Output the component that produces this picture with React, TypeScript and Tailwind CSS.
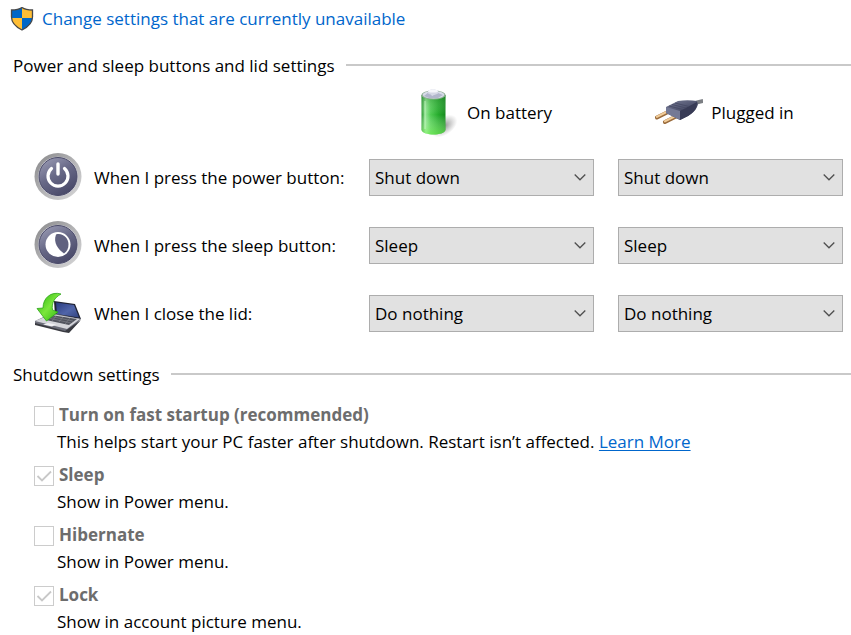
import { useId, useState, type ReactNode } from "react";

function ShieldIcon() {
  return (
    <svg className="h-6 w-6 shrink-0" viewBox="0 0 24 24" aria-hidden="true">
      <defs>
        <clipPath id="shield-clip">
          <path d="M12 .5C9 2.500 5 3 1.500 3V10C1.500 16 6 20 12 23C18 20 22.500 16 22.500 10V3C19 3 15 2.500 12 .5Z" />
        </clipPath>
      </defs>
      <g clipPath="url(#shield-clip)">
        <path fill="#0067c8" d="M0 0H12V11H0ZM12 11H24V24H12Z" />
        <path fill="#ffbe35" d="M12 0H24V11H12ZM0 11H12V24H0Z" />
      </g>
      <path
        d="M12 .5C9 2.500 5 3 1.500 3V10C1.500 16 6 20 12 23C18 20 22.500 16 22.500 10V3C19 3 15 2.500 12 .5Z"
        fill="none"
        stroke="#484848"
        strokeWidth="1.300"
      />
    </svg>
  );
}

function BatteryIcon() {
  return (
    <svg className="h-12 w-12 shrink-0" viewBox="0 0 48 48" aria-hidden="true">
      <defs>
        <linearGradient id="cell" x1="0" x2="1">
          <stop offset="0" stopColor="#2f9a35" />
          <stop offset=".18" stopColor="#8fe590" />
          <stop offset=".38" stopColor="#4fcb52" />
          <stop offset=".7" stopColor="#25ab2c" />
          <stop offset="1" stopColor="#158a1d" />
        </linearGradient>
        <linearGradient id="cell-glow" x1="0" x2="0" y1="0" y2="1">
          <stop offset="0" stopColor="#176f20" stopOpacity=".35" />
          <stop offset=".5" stopColor="#fff" stopOpacity="0" />
          <stop offset="1" stopColor="#83fb5c" stopOpacity=".55" />
        </linearGradient>
        <radialGradient id="cell-shadow">
          <stop offset="0" stopColor="#555" stopOpacity=".65" />
          <stop offset="1" stopColor="#777" stopOpacity="0" />
        </radialGradient>
      </defs>
      <ellipse cx="33" cy="37" rx="15" ry="9" fill="url(#cell-shadow)" transform="rotate(-35 33 37)" />
      <path d="M10.500 6V41C12 47 33 47 34.500 41V6Z" fill="url(#cell)" />
      <path d="M10.500 6V41C12 47 33 47 34.500 41V6Z" fill="url(#cell-glow)" />
      <ellipse cx="22.500" cy="6" rx="12" ry="4.500" fill="#8fae96" />
      <ellipse cx="22.500" cy="5.700" rx="10.800" ry="3.800" fill="#d8dbe8" />
      <path d="M13 7L18 3L21 7L27 4L32 6L27 9H18Z" fill="#b1b6cb" />
      <path d="M17 4V2C17 0 27 0 27 2V4C27 6 17 6 17 4Z" fill="#d4d7e4" />
      <ellipse cx="22" cy="2" rx="5" ry="1.600" fill="#f5f6fb" />
      <path d="M14 12V40" stroke="#d4ffd0" strokeWidth="1.500" opacity=".45" />
    </svg>
  );
}

function PlugIcon() {
  return (
    <svg className="h-12 w-12 shrink-0" viewBox="0 0 48 48" aria-hidden="true">
      <defs>
        <linearGradient id="plug-body" x1="0" x2=".6" y1="0" y2="1">
          <stop offset="0" stopColor="#777b94" />
          <stop offset=".45" stopColor="#565a75" />
          <stop offset="1" stopColor="#303249" />
        </linearGradient>
      </defs>
      <path d="M37 16C40 14 43 12.500 48 12" fill="none" stroke="#7b7e83" strokeWidth="4" />
      <path d="M2 28.500L14 22.500M10 33L22 27" stroke="#9a6b3b" strokeWidth="4" strokeLinecap="round" />
      <path d="M2 27.800L14 21.800M10 32.300L22 26.300" stroke="#f0cb98" strokeWidth="2.200" strokeLinecap="round" />
      <path d="M11 18L23 12C29 11 36 11 42 12L43 15C42 20 38 24 33 27L25 31L11 24Z" fill="url(#plug-body)" />
      <path d="M11 18L25 22V31L11 24Z" fill="#747995" />
      <path d="M25 22L42 13C42 20 38 24 33 27L25 31Z" fill="#383b56" />
      <path d="M14 17L28 20.500M17 15.500L31 19M20 14L34 17.500" stroke="#444762" strokeWidth=".8" />
    </svg>
  );
}

function RoundKey({ name, children }: { name: string; children: ReactNode }) {
  return (
    <svg className="h-12 w-12 shrink-0" viewBox="0 0 48 48" aria-hidden="true">
      <defs>
        <linearGradient id={`${name}-rim`} x1="0" x2="1" y1="0" y2="1">
          <stop offset="0" stopColor="#878789" />
          <stop offset=".5" stopColor="#b3b3b5" />
          <stop offset="1" stopColor="#d9d9da" />
        </linearGradient>
        <linearGradient id={`${name}-face`} x1=".15" x2=".75" y1="0" y2="1">
          <stop offset="0" stopColor="#9a9bb4" />
          <stop offset=".45" stopColor="#696a88" />
          <stop offset="1" stopColor="#464666" />
        </linearGradient>
      </defs>
      <circle cx="24" cy="23.500" r="23.500" fill={`url(#${name}-rim)`} />
      <circle cx="24" cy="23.500" r="19.800" fill="#d9d9e4" />
      <circle cx="24" cy="23.500" r="19" fill={`url(#${name}-face)`} stroke="#4b4b68" />
      {children}
    </svg>
  );
}

function PowerIcon() {
  return (
    <RoundKey name="power">
      <path d="M17.500 15.500A10 10 0 1 0 30.500 15.500" fill="none" stroke="#fff" strokeWidth="3.200" strokeLinecap="round" />
      <path d="M24 11V21" stroke="#fff" strokeWidth="3.400" strokeLinecap="round" />
    </RoundKey>
  );
}

function SleepIcon() {
  return (
    <RoundKey name="sleep">
      <circle cx="24" cy="23.500" r="12.500" fill="#fff" />
      <path d="M22 13.500C29 11.500 34.500 17.500 34.500 23.500C34.500 27.500 33 30.500 30 32.500C24 28.500 19 21.500 22 13.500Z" fill="#60617f" />
    </RoundKey>
  );
}

function LidIcon() {
  return (
    <svg className="h-12 w-12 shrink-0" viewBox="0 0 48 48" aria-hidden="true">
      <defs>
        <linearGradient id="lid-screen" x1="0" x2="1" y1="0" y2="1">
          <stop offset="0" stopColor="#293b80" />
          <stop offset=".55" stopColor="#5065a9" />
          <stop offset="1" stopColor="#30427f" />
        </linearGradient>
        <linearGradient id="lid-arrow" x1="0" x2="1" y1="0" y2="1">
          <stop offset="0" stopColor="#25b30c" />
          <stop offset=".5" stopColor="#7be63c" />
          <stop offset="1" stopColor="#28b50d" />
        </linearGradient>
      </defs>
      <path d="M20 12L41 15L47 30L21 26Z" fill="#202333" />
      <path d="M22 13.500L40 16L45 28.500L23 25Z" fill="url(#lid-screen)" />
      <path d="M1 32L18 24L47 30L35 43L29 42L1 35Z" fill="#6b6d79" />
      <path d="M1 32L18 25L46 30L33 40Z" fill="#d4d5da" />
      <path d="M17 26L43 30L35 36L12 31Z" fill="#50535d" />
      <path d="M14 29L37 34M17 27.500L39 32M22 27L18 32M29 28L25 33M36 29L31 35" stroke="#85878f" strokeWidth=".6" />
      <path d="M14 34L22 35.500L18 37.500L9 35.500Z" fill="#f0f0f3" />
      <path d="M1 34L31 42L47 31L35 44L29 43L1 36Z" fill="#393a40" />
      <path
        d="M27 5C17 2 9 9 9 19L3 19.500L12.500 32L24 23L18.500 21C17.500 14 20 9 27 5Z"
        fill="url(#lid-arrow)"
        stroke="#2fa51c"
        strokeWidth=".8"
      />
    </svg>
  );
}

function SectionTitle({ children }: { children: ReactNode }) {
  return (
    <div className="mt-[13px] flex h-7 items-center gap-[11px] pl-[13px]">
      <h2 className="pt-0.5">{children}</h2>
      <span className="h-[2px] flex-1 bg-[#c9c9c9]" />
    </div>
  );
}

function ActionSelect({ label, initial }: { label: string; initial: string }) {
  const [value, setValue] = useState(initial);
  return (
    <div className="grid items-center">
      <select
        aria-label={label}
        value={value}
        onChange={(e) => setValue(e.target.value)}
        className="col-start-1 row-start-1 h-[37px] w-full appearance-none border border-[#adadad] bg-[#e1e1e1] pt-0.5 pr-8 pl-[5px]"
      >
        <option>Do nothing</option>
        <option>Sleep</option>
        <option>Hibernate</option>
        <option>Shut down</option>
      </select>
      <svg
        className="pointer-events-none col-start-1 row-start-1 mr-2 h-3 w-3 justify-self-end"
        viewBox="0 0 12 12"
        aria-hidden="true"
      >
        <path d="M.7 3.500L6 8.800L11.300 3.500" fill="none" stroke="#505050" strokeWidth="1.300" />
      </svg>
    </div>
  );
}

function ActionRow({ icon, label, initial }: { icon: ReactNode; label: string; initial: string }) {
  return (
    <div className="grid h-[68px] grid-cols-[311fr_225fr_225fr] items-center gap-x-6 pr-2 pl-[34px]">
      <div className="flex items-center gap-3 whitespace-nowrap">
        {icon}
        <span className="pt-0.5">{label}</span>
      </div>
      <ActionSelect label={`${label} On battery`} initial={initial} />
      <ActionSelect label={`${label} Plugged in`} initial={initial} />
    </div>
  );
}

function ShutdownOption({ title, checked, children }: { title: string; checked?: boolean; children: ReactNode }) {
  const id = useId();
  return (
    <div className="h-14">
      <div className="flex h-7 items-center gap-[5px]">
        <span className="grid place-items-center">
          <input
            id={id}
            type="checkbox"
            disabled
            defaultChecked={checked}
            className="peer col-start-1 row-start-1 h-5 w-5 appearance-none border border-[#cccccc] bg-white"
          />
          <svg
            className="pointer-events-none invisible col-start-1 row-start-1 h-5 w-5 peer-checked:visible"
            viewBox="0 0 20 20"
            aria-hidden="true"
          >
            <path d="M3.500 10L8 14.500L17 5.500" fill="none" stroke="#c8c8c8" strokeWidth="1.800" />
          </svg>
        </span>
        <label htmlFor={id} className="pb-0.5 font-bold text-[#6d6d6d]">
          {title}
        </label>
      </div>
      <p className="pl-[23px] leading-6">{children}</p>
    </div>
  );
}

export default function App() {
  return (
    <main className="bg-white font-['Open_Sans','Noto_Sans',sans-serif] text-[17px] leading-7 text-black">
      <div className="flex h-[38px] items-center pl-[10px]">
        <a href="#unlock" className="flex items-center gap-2 text-[#0066cc]">
          <ShieldIcon />
          Change settings that are currently unavailable
        </a>
      </div>

      <SectionTitle>Power and sleep buttons and lid settings</SectionTitle>
      <div className="grid h-16 grid-cols-[311fr_225fr_225fr] items-center gap-x-6 pt-1 pr-2 pl-[34px]">
        <span />
        <div className="flex items-center justify-center gap-2">
          <BatteryIcon />
          On battery
        </div>
        <div className="flex items-center justify-center gap-2 pr-3">
          <PlugIcon />
          Plugged in
        </div>
      </div>
      <ActionRow icon={<PowerIcon />} label="When I press the power button:" initial="Shut down" />
      <ActionRow icon={<SleepIcon />} label="When I press the sleep button:" initial="Sleep" />
      <ActionRow icon={<LidIcon />} label="When I close the lid:" initial="Do nothing" />

      <SectionTitle>Shutdown settings</SectionTitle>
      <div className="mt-[14px] flex flex-col gap-1 pl-[34px]">
        <ShutdownOption title="Turn on fast startup (recommended)">
          This helps start your PC faster after shutdown. Restart isn’t affected.{" "}
          <a href="#learn-more" className="text-[#0066cc] underline underline-offset-2">
            Learn More
          </a>
        </ShutdownOption>
        <ShutdownOption title="Sleep" checked>
          Show in Power menu.
        </ShutdownOption>
        <ShutdownOption title="Hibernate">Show in Power menu.</ShutdownOption>
        <ShutdownOption title="Lock" checked>
          Show in account picture menu.
        </ShutdownOption>
      </div>
    </main>
  );
}
